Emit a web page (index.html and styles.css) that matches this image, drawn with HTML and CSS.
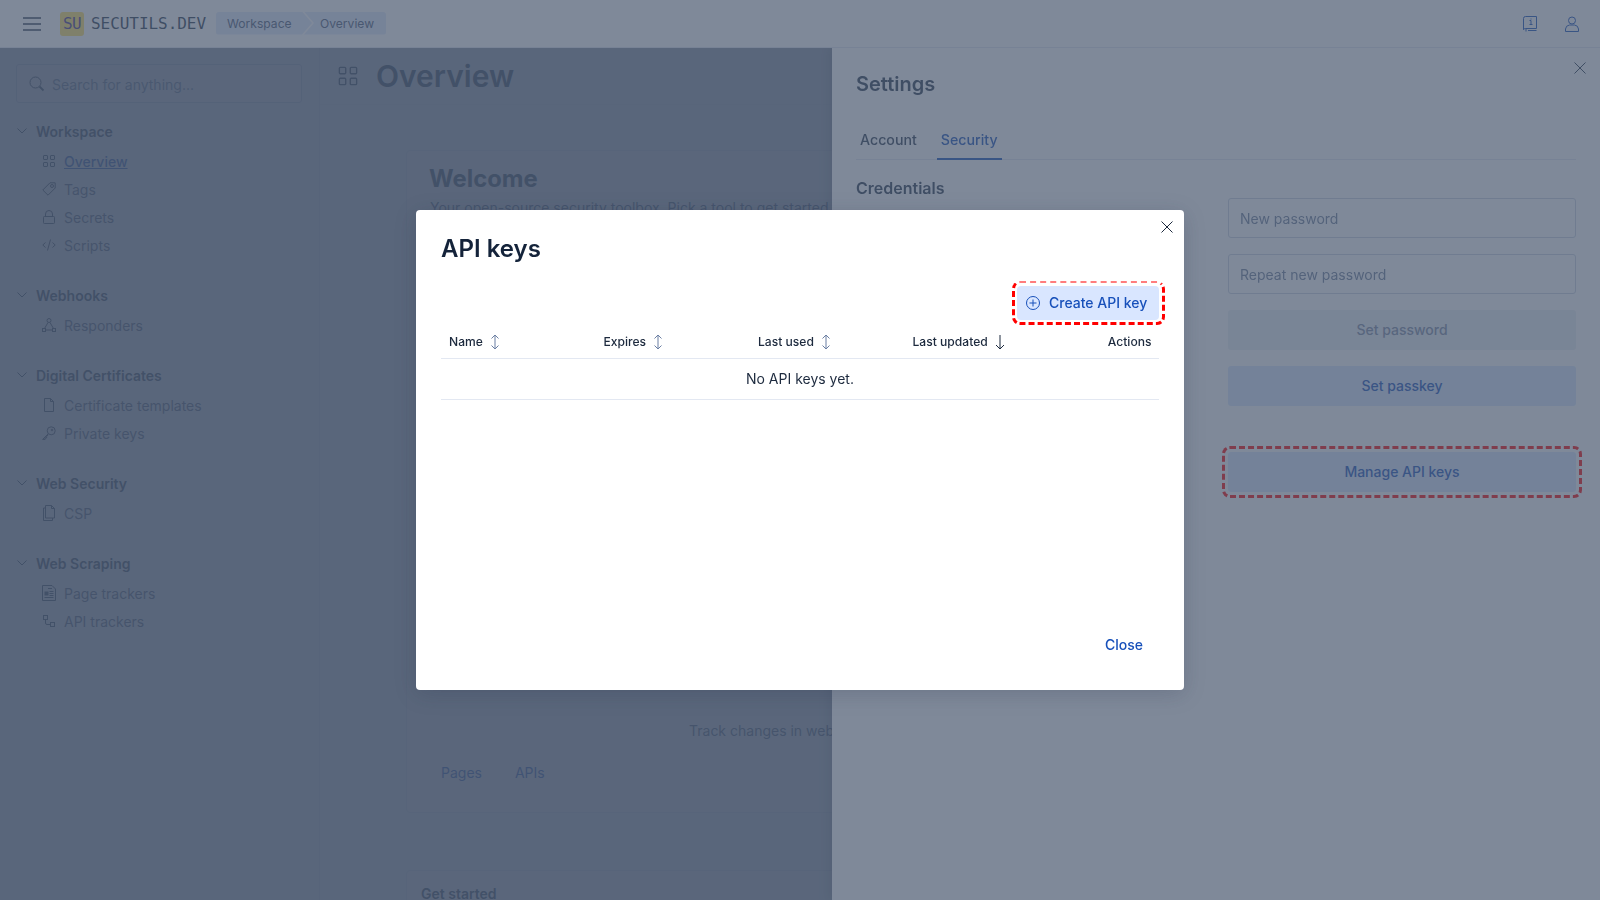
FILE: index.html
```html
<!DOCTYPE html>
<html lang="en">
<head>
<meta charset="utf-8">
<title>Secutils.dev</title>
<link rel="stylesheet" href="styles.css">
</head>
<body>
<div class="app">
  <header class="topbar">
    <svg class="burger" width="18" height="14" viewBox="0 0 18 14"><path d="M0 1h18M0 7h18M0 13h18" stroke="#2b394f" stroke-width="1.3" fill="none"/></svg>
    <div class="logo">SU</div>
    <div class="brand">SECUTILS.DEV</div>
    <nav class="crumbs"><span class="crumb crumb-first">Workspace</span><span class="crumb crumb-last">Overview</span></nav>
    <div class="top-actions">
      <svg class="ic-top" width="14" height="16" viewBox="0 0 14 16" fill="none" stroke="#1750ba"><path d="M2.500.5h11v12H2.500a2 2 0 0 0-2 1.200V2.500a2 2 0 0 1 2-2z"/><path d="M3 12.500v3M5 14.500h8.500"/><path d="M6.500 4.500h1.500v4M6.500 8.500h3M8 2.500v1"/></svg>
      <svg class="ic-top" width="14" height="16" viewBox="0 0 14 16" fill="none" stroke="#1750ba"><circle cx="7" cy="4.500" r="3.500"/><path d="M.5 15.500v-2.500a4.500 4.500 0 0 1 4-4h5a4.500 4.500 0 0 1 4 4v2.500z"/></svg>
    </div>
  </header>
  <div class="body">
    <aside class="sidebar">
      <div class="search">
        <svg width="16" height="16" viewBox="0 0 16 16" fill="none" stroke="#2b394f"><circle cx="6.500" cy="6.500" r="5.500"/><path d="M10.500 10.500l4 4" stroke-width="1.800"/></svg>
        <span>Search for anything...</span>
      </div>
      <section class="nav-group">
        <h3 class="nav-head"><svg class="chev" width="10" height="6" viewBox="0 0 10 6"><path d="M.5.500l4.500 4.500 4.500-4.500" fill="none" stroke="#2b394f"/></svg>Workspace</h3>
        <a class="nav-item current"><svg width="14" height="14" viewBox="0 0 14 14" fill="none" stroke="#2b394f"><rect x="1.500" y="1.500" width="4" height="4" rx=".5"/><rect x="8.500" y="1.500" width="4" height="4" rx=".5"/><rect x="1.500" y="8.500" width="4" height="4" rx=".5"/><rect x="8.500" y="8.500" width="4" height="4" rx=".5"/></svg><span>Overview</span></a>
        <a class="nav-item"><svg width="14" height="14" viewBox="0 0 14 14" fill="none" stroke="#2b394f"><path d="M.8 8L8 .8h5.200V6L6 13.200z"/><circle cx="10" cy="4" r="1.500"/></svg><span>Tags</span></a>
        <a class="nav-item"><svg width="14" height="14" viewBox="0 0 14 14" fill="none" stroke="#2b394f"><rect x="1.500" y="6.500" width="11" height="7" rx=".8"/><path d="M3.500 6.500V4a3.500 3.500 0 0 1 7 0v2.500"/></svg><span>Secrets</span></a>
        <a class="nav-item"><svg width="14" height="14" viewBox="0 0 14 14" fill="none" stroke="#2b394f"><path d="M3.500 4.500L.8 7l2.700 2.500M10.500 4.500L13.200 7l-2.700 2.500M8.500 1.500l-3 11"/></svg><span>Scripts</span></a>
      </section>
      <section class="nav-group">
        <h3 class="nav-head"><svg class="chev" width="10" height="6" viewBox="0 0 10 6"><path d="M.5.500l4.500 4.500 4.500-4.500" fill="none" stroke="#2b394f"/></svg>Webhooks</h3>
        <a class="nav-item"><svg width="14" height="14" viewBox="0 0 14 14" fill="none" stroke="#2b394f"><circle cx="7" cy="2.500" r="2"/><rect x=".5" y="10.500" width="3" height="3"/><rect x="10.500" y="10.500" width="3" height="3"/><path d="M6 4.500L2.500 10.500M8 4.500l3.500 6M3.500 12h7"/></svg><span>Responders</span></a>
      </section>
      <section class="nav-group">
        <h3 class="nav-head"><svg class="chev" width="10" height="6" viewBox="0 0 10 6"><path d="M.5.500l4.500 4.500 4.500-4.500" fill="none" stroke="#2b394f"/></svg>Digital Certificates</h3>
        <a class="nav-item"><svg width="14" height="14" viewBox="0 0 14 14" fill="none" stroke="#2b394f"><path d="M2.500.5h6l3 3v10h-9zM8.500.5v3h3"/></svg><span>Certificate templates</span></a>
        <a class="nav-item"><svg width="14" height="14" viewBox="0 0 14 14" fill="none" stroke="#2b394f"><circle cx="9.200" cy="4.800" r="4"/><path d="M6.200 7.800L.6 13.400h2.500v-1.500h1.500v-1.500l1.600-1.400"/><circle cx="10" cy="4" r=".8"/></svg><span>Private keys</span></a>
      </section>
      <section class="nav-group">
        <h3 class="nav-head"><svg class="chev" width="10" height="6" viewBox="0 0 10 6"><path d="M.5.500l4.500 4.500 4.500-4.500" fill="none" stroke="#2b394f"/></svg>Web Security</h3>
        <a class="nav-item"><svg width="14" height="16" viewBox="0 0 14 16" fill="none" stroke="#2b394f"><path d="M3.500.5h6l3 3v9.500h-9zM9.500.5v3h3M3.500 3H1.500v12.500h9V13"/></svg><span>CSP</span></a>
      </section>
      <section class="nav-group">
        <h3 class="nav-head"><svg class="chev" width="10" height="6" viewBox="0 0 10 6"><path d="M.5.500l4.500 4.500 4.500-4.500" fill="none" stroke="#2b394f"/></svg>Web Scraping</h3>
        <a class="nav-item"><svg width="14" height="16" viewBox="0 0 14 16" fill="none" stroke="#2b394f"><path d="M.5.500h9.500l3.500 3.500v11.500H.5z"/><rect x="2.500" y="6.500" width="4" height="4" fill="#2b394f" stroke="none"/><path d="M7.500 6.500h4M7.500 8.500h4M7.500 10.500h4M2.500 12.500h9M6 3.500h4"/></svg><span>Page trackers</span></a>
        <a class="nav-item"><svg width="14" height="14" viewBox="0 0 14 14" fill="none" stroke="#2b394f"><rect x="1.500" y="1.500" width="4" height="4"/><rect x="8.500" y="8.500" width="4" height="4"/><path d="M5.500 3.500v0M3.500 5.500V9a1.500 1.500 0 0 0 1.500 1.500h3.500"/></svg><span>API trackers</span></a>
      </section>
    </aside>
    <main class="content">
      <div class="page-head">
        <svg width="20" height="20" viewBox="0 0 22 22" fill="none" stroke="#2b394f" stroke-width="1.500"><rect x="1.500" y="1.500" width="7" height="7" rx="1"/><rect x="13.500" y="1.500" width="7" height="7" rx="1"/><rect x="1.500" y="13.500" width="7" height="7" rx="1"/><rect x="13.500" y="13.500" width="7" height="7" rx="1"/></svg>
        <h1>Overview</h1>
      </div>
      <div class="card card-welcome">
        <h2>Welcome</h2>
        <p class="lead">Your open-source security toolbox. Pick a tool to get started.</p>
        <p class="tile-text">Track changes in web pages and APIs</p>
        <div class="tile-links"><a>Pages</a><a>APIs</a></div>
      </div>
      <div class="card card-start"><h4>Get started</h4></div>
    </main>
  </div>
</div>

<div class="flyout-mask"></div>
<aside class="flyout">
  <svg class="fly-close" width="12" height="12" viewBox="0 0 12 12"><path d="M.5.500l11 11M11.500.5l-11 11" stroke="#2b394f" fill="none"/></svg>
  <h2 class="fly-title">Settings</h2>
  <div class="tabs"><span class="tab">Account</span><span class="tab tab-on">Security</span></div>
  <div class="cred">
    <h3>Credentials</h3>
    <div class="cred-form">
      <div class="field">New password</div>
      <div class="field">Repeat new password</div>
      <div class="btn btn-off">Set password</div>
      <div class="btn btn-soft">Set passkey</div>
      <div class="btn btn-soft btn-manage">Manage API keys<i class="mark mark-dim"></i></div>
    </div>
  </div>
</aside>

<div class="modal-mask">
  <div class="modal">
    <svg class="modal-close" width="12" height="12" viewBox="0 0 12 12"><path d="M.5.500l11 11M11.500.5l-11 11" stroke="#1d2a3e" fill="none"/></svg>
    <h2 class="modal-title">API keys</h2>
    <div class="modal-tools">
      <div class="create">
        <svg width="14" height="14" viewBox="0 0 14 14" fill="none" stroke="#1750ba"><circle cx="7" cy="7" r="6.500"/><path d="M7 3.500v7M3.500 7h7"/></svg>
        <span>Create API key</span>
        <i class="mark"></i>
      </div>
    </div>
    <div class="table">
      <div class="thead">
        <div class="th">Name<svg width="10" height="16" viewBox="0 0 10 16" fill="none" stroke="#6b7fa3"><path d="M5 1v14M1.500 4.500L5 1l3.500 3.500M1.500 11.500L5 15l3.500-3.500"/></svg></div>
        <div class="th">Expires<svg width="10" height="16" viewBox="0 0 10 16" fill="none" stroke="#6b7fa3"><path d="M5 1v14M1.500 4.500L5 1l3.500 3.500M1.500 11.500L5 15l3.500-3.500"/></svg></div>
        <div class="th">Last used<svg width="10" height="16" viewBox="0 0 10 16" fill="none" stroke="#6b7fa3"><path d="M5 1v14M1.500 4.500L5 1l3.500 3.500M1.500 11.500L5 15l3.500-3.500"/></svg></div>
        <div class="th">Last updated<svg width="10" height="16" viewBox="0 0 10 16" fill="none" stroke="#1d2a3e"><path d="M5 1v14M1 11l4 4 4-4"/></svg></div>
        <div class="th th-end">Actions</div>
      </div>
      <div class="tempty">No API keys yet.</div>
    </div>
    <div class="modal-foot"><span class="close-link">Close</span></div>
  </div>
</div>
</body>
</html>
```
FILE: styles.css
```css
* { box-sizing: border-box; }
html, body { margin: 0; height: 100%; overflow: hidden; }
body { font-family: Inter, "Liberation Sans", sans-serif; font-size: 14px; color: #2b394f; background: #f6f9fc; }
h1, h2, h3, h4, p { margin: 0; }
svg { display: block; flex: none; }

.app { height: 900px; display: flex; flex-direction: column; }

.topbar { position: relative; z-index: 3; height: 48px; background: #fff; border-bottom: 1px solid #e3e8f2; display: flex; align-items: center; padding-left: 23px; flex: none; }
.logo { width: 24px; height: 24px; margin-left: 19px; background: #ffe066; border-radius: 3px; color: #4a3a8c; font: 16px/24px "DejaVu Sans Mono", monospace; text-align: center; letter-spacing: -.6px; }
.brand { margin-left: 7px; font: 16px/24px "DejaVu Sans Mono", monospace; color: #2b394f; letter-spacing: -.05px; }
.crumbs { margin-left: 10px; display: flex; height: 23px; margin-top: -1px; }
.crumb { display: flex; align-items: center; font-size: 12.100px; color: #4a5b78; background: #e2e9fb; }
.crumb-first { width: 96px; padding-left: 11px; clip-path: polygon(0 0, 86px 0, 96px 50%, 86px 100%, 0 100%); border-radius: 3px 0 0 3px; }
.crumb-last { width: 82px; margin-left: -8px; padding-left: 16px; clip-path: polygon(0 0, 100% 0, 100% 100%, 0 100%, 10px 50%); border-radius: 0 3px 3px 0; }
.top-actions { margin-left: auto; display: flex; gap: 28px; padding-right: 21px; }

.body { flex: 1; display: flex; min-height: 0; }
.sidebar { width: 320px; flex: none; padding: 16px 16px 0; border-right: 1px solid #e3e8f2; }
.search { height: 39px; width: 286px; border: 1px solid #cbd3e1; border-radius: 3px; display: flex; align-items: center; padding: 1px 0 0 12px; gap: 7px; color: #6f7f9b; background: #fbfcfd; }
.nav-group { margin-bottom: 22px; }
.nav-group:first-of-type { margin-top: 14px; }
.nav-head { display: flex; align-items: center; height: 28px; font-size: 14px; font-weight: 600; margin-bottom: 2px; color: #2b394f; }
.chev { margin: 0 9px 0 1px; }
.nav-item { display: flex; align-items: center; height: 28px; padding-left: 26px; gap: 8px; color: #4a5b78; }
.nav-item.current span { color: #1750ba; text-decoration: underline; font-weight: 500; }

.content { flex: 1; min-width: 0; overflow: hidden; }
.page-head { height: 57px; display: flex; align-items: center; gap: 18px; padding: 0 0 0 18px; border-bottom: 1px solid #eef1f6; margin-bottom: 45px; }
.page-head h1 { font-size: 30px; font-weight: 600; line-height: 56px; color: #2b394f; }
.card { margin-left: 86px; width: 1108px; border: 1px solid #e3e8f2; border-radius: 4px; background: #f9fbfd; padding-left: 23px; }
.card-welcome { height: 663px; padding-top: 10px; }
.card-welcome h2 { font-size: 23.800px; font-weight: 700; line-height: 36px; margin-left: -1px; color: #2b394f; }
.lead { line-height: 20px; margin-top: 1px; color: #4a5b78; }
.tile-text { margin: 502.500px 0 0 259px; line-height: 20px; color: #4a5b78; }
.tile-links { display: flex; gap: 33px; margin: 22px 0 0 11px; line-height: 20px; color: #1750ba; }
.card-start { margin-top: 57px; height: 100px; padding: 13px 0 0 14px; }
.card-start h4 { font-size: 14px; font-weight: 600; line-height: 20px; }

.flyout-mask { position: fixed; left: 0; right: 0; top: 48px; bottom: 0; z-index: 1; background: rgba(60, 73, 97, .63); }
.flyout { position: fixed; z-index: 2; top: 48px; right: 0; bottom: 0; width: 768px; background: #fff; padding: 0 24px; box-shadow: -3px 0 10px rgba(30, 40, 60, .18); }
.fly-close { position: absolute; top: 14px; right: 14px; }
.fly-title { font-size: 20px; font-weight: 600; line-height: 28px; margin-top: 22px; color: #2b394f; }
.tabs { display: flex; margin-top: 24px; border-bottom: 1px solid #e3e8f2; height: 38px; }
.tab { padding: 0 4px; margin-right: 16px; line-height: 35px; font-size: 14.200px; font-weight: 500; color: #2b394f; height: 38px; }
.tab-on { color: #1750ba; border-bottom: 2px solid #1750ba; margin-right: 0; }
.cred { display: flex; justify-content: space-between; margin-top: 17px; }
.cred h3 { font-size: 16px; font-weight: 600; line-height: 24px; margin-top: -1px; }
.cred-form { width: 348px; margin-top: 21px; display: flex; flex-direction: column; }
.field { height: 40px; border: 1px solid #cbd3e1; border-radius: 3px; padding: 1px 11px 0; line-height: 38px; color: #6f7f9b; margin-bottom: 16px; }
.btn { height: 40px; border-radius: 3px; text-align: center; line-height: 40px; font-weight: 450; margin-bottom: 16px; position: relative; }
.btn-off { background: #ecf0f6; color: #7d8aa3; }
.btn-soft { background: #d9e8ff; color: #1750ba; }
.btn-manage { margin-top: 30px; }
.mark { position: absolute; inset: -5px -6px -5px -5px; border: 3px dashed #f00; border-radius: 8px; pointer-events: none; }
.mark-dim { inset: -6px; }

.modal-mask { position: fixed; inset: 0; z-index: 4; background: rgba(73, 87, 110, .7); display: flex; align-items: center; justify-content: center; }
.modal { position: relative; width: 768px; height: 480px; background: #fff; border-radius: 4px; box-shadow: 0 4px 22px rgba(30, 40, 70, .2); padding: 0 25px; color: #1d2a3e; display: flex; flex-direction: column; }
.modal-close { position: absolute; top: 11px; right: 11px; }
.modal-title { font-size: 24px; font-weight: 600; line-height: 32px; margin-top: 23px; color: #14233a; }
.modal-tools { display: flex; justify-content: flex-end; margin-top: 21px; }
.create { position: relative; display: flex; align-items: center; gap: 9px; height: 34px; width: 142px; padding: 0 0 1px 9px; background: #d9e6ff; border-radius: 4px; color: #1750ba; font-weight: 500; }
.create .mark { border-top-color: #ff7d7d; border-top-width: 2px; }
.table { margin-top: 4px; }
.thead { display: grid; grid-template-columns: 154.500px 154.500px 154.500px 154px 101px; height: 35px; padding-top: 1px; border-bottom: 1px solid #e3e8f2; }
.th { display: flex; align-items: center; gap: 7px; padding-left: 8px; font-size: 12.100px; font-weight: 500; }
.th-end { justify-content: flex-end; padding: 0 8px 0 0; }
.tempty { height: 41px; line-height: 40px; text-align: center; border-bottom: 1px solid #e3e8f2; }
.modal-foot { margin-top: auto; padding: 0 16px 34px 0; display: flex; justify-content: flex-end; }
.close-link { color: #1750ba; font-weight: 500; line-height: 22px; }
```
